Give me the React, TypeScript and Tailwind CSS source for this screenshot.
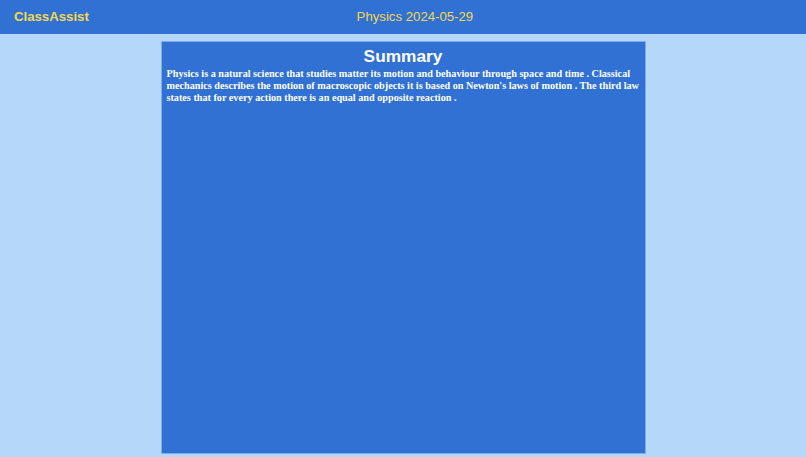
import React from 'react';

const summary =
  "Physics is a natural science that studies matter its motion and behaviour through space and time . Classical mechanics describes the motion of macroscopic objects it is based on Newton's laws of motion . The third law states that for every action there is an equal and opposite reaction .";

export default function App() {
  return (
    <div className="min-h-screen bg-[#b5d7fa] font-['Liberation_Sans',Arial,sans-serif]">
      {/* Header */}
      <header className="h-[34px] bg-[#3171d4] flex items-center px-[14px]">
        <div className="text-[13.2px] font-bold text-[#f3d84e]">ClassAssist</div>
        <div className="flex-1 text-center pr-[51px] text-[13.2px] text-[#f3d84e]">Physics 2024-05-29</div>
      </header>

      {/* Summary panel */}
      <div className="pt-[7px] flex justify-center">
        <div className="w-[485px] h-[413px] bg-[#3171d4] border border-[#7aaef0] pl-[4px]">
          <h2 className="text-center text-white font-bold text-[17.3px] leading-[24px] pt-[2px] pr-[4px]">Summary</h2>
          <p className="text-white font-bold text-[10.2px] leading-[12px] pl-[1px] font-['Liberation_Serif','Times_New_Roman',serif]">
            {summary}
          </p>
        </div>
      </div>
    </div>
  );
}
